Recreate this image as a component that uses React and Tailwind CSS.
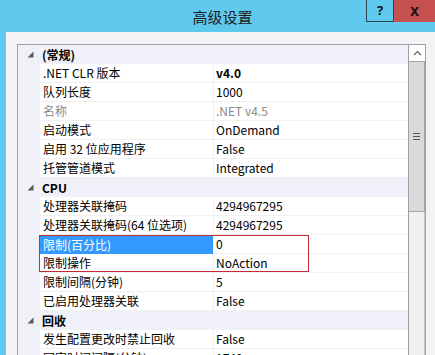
import React from "react";

const rows = [
  { cat: "(常规)" },
  { name: ".NET CLR 版本", value: "v4.0", bold: true },
  { name: "队列长度", value: "1000" },
  { name: "名称", value: ".NET v4.5", dim: true },
  { name: "启动模式", value: "OnDemand" },
  { name: "启用 32 位应用程序", value: "False" },
  { name: "托管管道模式", value: "Integrated" },
  { cat: "CPU" },
  { name: "处理器关联掩码", value: "4294967295" },
  { name: "处理器关联掩码(64 位选项)", value: "4294967295" },
  { name: "限制(百分比)", value: "0", selected: true },
  { name: "限制操作", value: "NoAction" },
  { name: "限制间隔(分钟)", value: "5" },
  { name: "已启用处理器关联", value: "False" },
  { cat: "回收" },
  { name: "发生配置更改时禁止回收", value: "False" },
  { name: "固定时间间隔(分钟)", value: "1740" },
];

const Expander = () => (
  <svg width="7" height="7" viewBox="0 0 7 7" className="block">
    <polygon points="6.5,0.5 6.5,6.5 0.5,6.5" fill="#5a5a5a" />
  </svg>
);

const Row = ({ r }) => {
  if (r.cat) {
    return (
      <div className="flex h-[19px] shrink-0 items-center bg-[#f0f0f8]">
        <div className="flex w-[22px] justify-center pl-[2px]">
          <Expander />
        </div>
        <span className="pl-[2px] font-bold text-black">{r.cat}</span>
      </div>
    );
  }
  return (
    <div className="flex h-[19px] shrink-0">
      <div className="w-[22px] bg-[#f0f0f8]" />
      <div
        className={
          r.selected
            ? "flex w-[173px] items-center bg-[#3399ff] pl-[3px] text-white"
            : "flex w-[173px] items-center border-b border-[#f0f0f0] pl-[3px] text-black"
        }
      >
        <span className={r.dim ? "text-[#8a8a8a]" : ""}>{r.name}</span>
      </div>
      <div className="w-px bg-[#f0f0f0]" />
      <div className="flex flex-1 items-center border-b border-[#f0f0f0] pl-[2px]">
        <span className={r.bold ? "font-bold text-black" : r.dim ? "text-[#8a8a8a]" : "text-black"}>
          {r.value}
        </span>
      </div>
    </div>
  );
};

export default function App() {
  return (
    <div
      className="relative flex h-[355px] w-[435px] flex-col overflow-hidden bg-[#60c9ee] text-[12px] leading-none"
      style={{ fontFamily: '"Noto Sans", "Noto Sans CJK SC", sans-serif' }}
    >
      {/* Title bar */}
      <div className="flex h-[32px] shrink-0 items-center justify-center pl-[10px]">
        <span className="text-[15px] text-[#1e1e1e]" style={{ fontFamily: '"Noto Sans CJK SC", sans-serif' }}>
          高级设置
        </span>
      </div>
      <div className="absolute right-0 top-0 flex h-[22px]">
        <div className="flex w-[28px] items-center justify-center border border-t-0 border-[#2b4554] bg-[#60c9ee] text-[13px] font-bold text-[#111]">
          ?
        </div>
        <div className="flex w-[41px] items-center justify-center bg-[#c75050] text-[13px] font-bold text-[#111]">
          X
        </div>
      </div>

      {/* Dialog body */}
      <div className="ml-[6px] flex flex-1 flex-col bg-[#f5f3f6] pl-[11px] pr-[9px] pt-[12px]">
        <div className="flex flex-1 overflow-hidden border border-b-0 border-[#a0a0a0] bg-white">
          <div className="relative flex flex-1 flex-col" style={{ fontFamily: '"Noto Sans CJK SC", sans-serif' }}>
            {rows.map((r, i) => (
              <Row key={i} r={r} />
            ))}
            {/* highlight frame */}
            <div className="absolute left-[21px] top-[190px] h-[37px] w-[270px] border border-[#c62a35]" />
          </div>

          {/* Scrollbar */}
          <div className="flex w-[17px] flex-col border-l border-[#a0a0a0]">
            <div className="flex h-[16px] items-center justify-center bg-white">
              <svg width="9" height="6" viewBox="0 0 9 6">
                <polyline points="1,5 4.5,1.5 8,5" fill="none" stroke="#606060" strokeWidth="1.2" />
              </svg>
            </div>
            <div className="flex h-[151px] items-center justify-center border-y border-r border-[#a6a6a6] bg-[#dadada]">
              <div className="flex flex-col gap-[2px]">
                <div className="h-px w-[7px] bg-[#555]" />
                <div className="h-px w-[7px] bg-[#555]" />
                <div className="h-px w-[7px] bg-[#555]" />
              </div>
            </div>
            <div className="flex-1 border-r border-[#c8c8c8] bg-[#f0f0f0]" />
          </div>
        </div>
      </div>
    </div>
  );
}
